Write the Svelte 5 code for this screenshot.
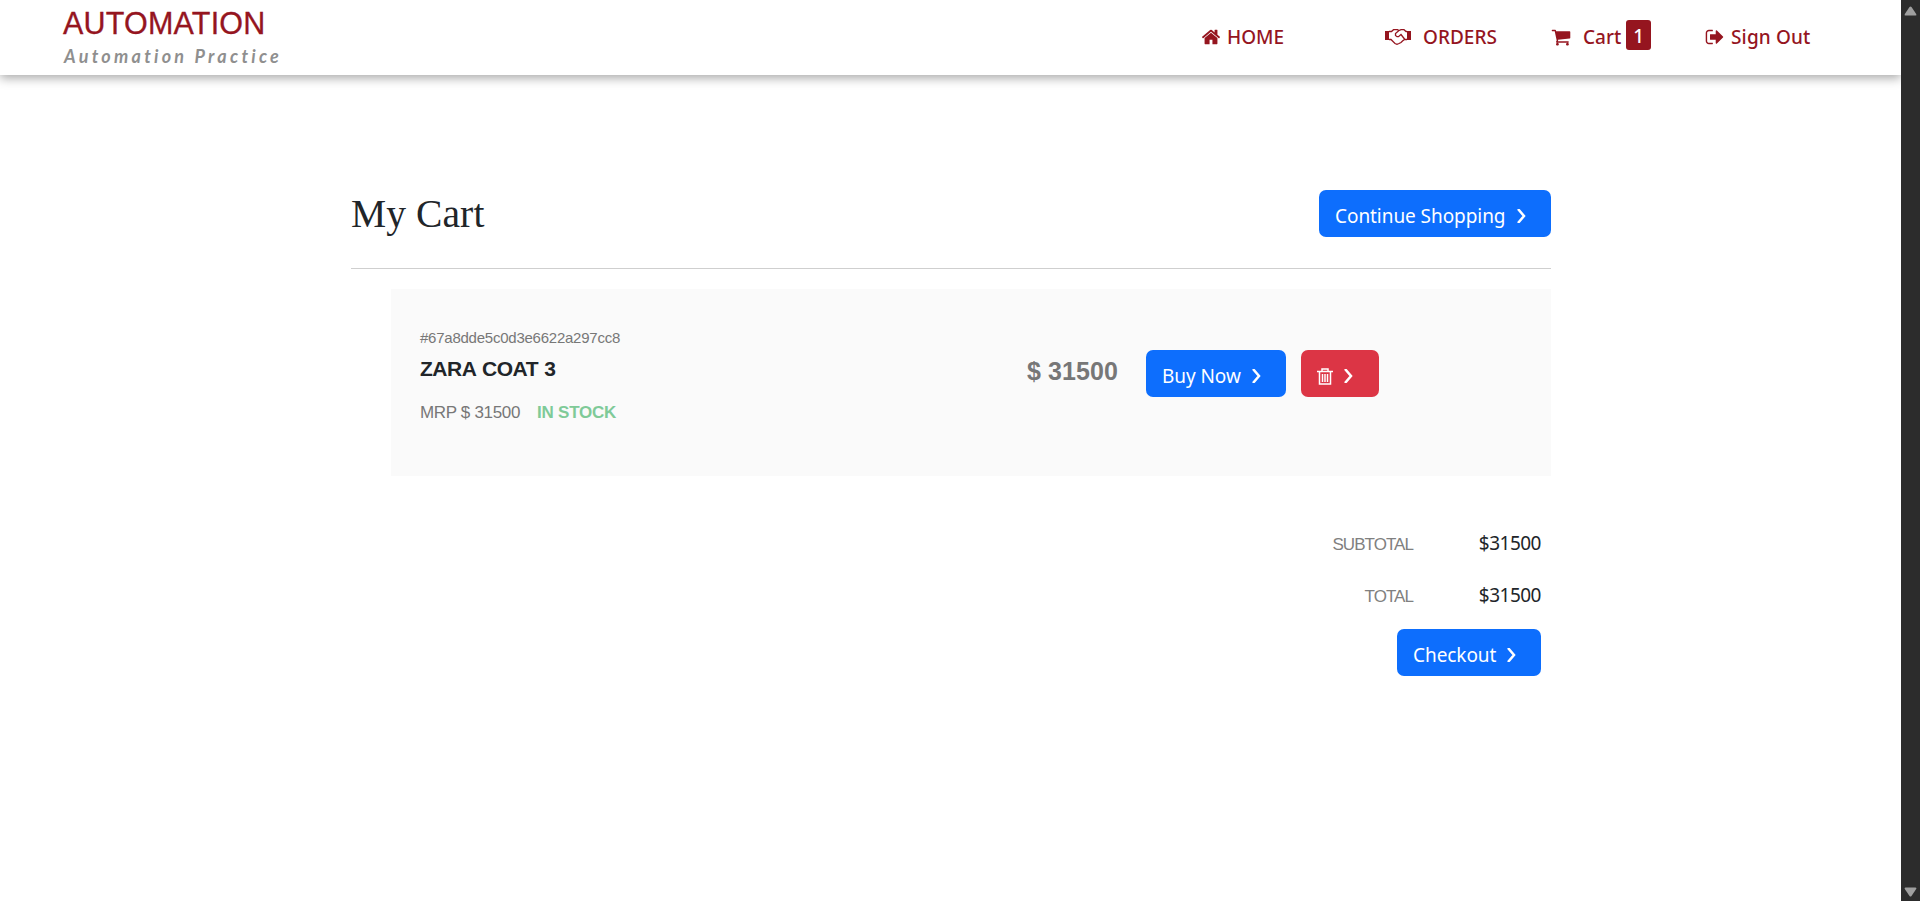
<script>
  const product = { id: '#67a8dde5c0d3e6622a297cc8', name: 'ZARA COAT 3', price: 31500 };
  let count = $state(1);
  const total = $derived(product.price * count);
</script>

{#snippet chevron()}
  <svg class="chev" viewBox="0 0 9 14"><path d="M1 0 L7 7 L1 14" /></svg>
{/snippet}

<div class="window">
  <div class="page">
    <header>
      <div class="brand">
        <h3>AUTOMATION</h3>
        <p>Automation Practice</p>
      </div>
      <nav>
        <a class="home" href="#home">
          <svg width="20" height="20" viewBox="0 0 1792 1792"><path d="M1472 992v480q0 26-19 45t-45 19h-384v-384h-256v384h-384q-26 0-45-19t-19-45v-480q0-1 .5-3t.5-3l575-474 575 474q1 2 1 6zm223-69l-62 74q-8 9-21 11h-3q-13 0-21-7l-692-577-692 577q-12 8-24 7-13-2-21-11l-62-74q-8-10-7-23.5t11-21.5l719-599q32-26 76-26t76 26l244 204v-195q0-14 9-23t23-9h192q14 0 23 9t9 23v408l219 182q10 8 11 21.5t-7 23.5z" /></svg>
          <span>HOME</span>
        </a>
        <a class="orders" href="#orders">
          <svg width="26" height="16" viewBox="0 0 26 16">
            <path d="M0 2h4v9H0zM22 2h4v9h-4z" />
            <path class="line" d="M4 2.5h2.500L8.500.7h4L14 1.500 16 .7h3l2 1.800h1M4 10.500h2l4 4 2 .8 2-.8 2-1 1.500-1.500 2-1.500H22M14 1.500l-3.500 3v2l1.500 1.200h1.500L16 5.500l3.500 4.500" />
          </svg>
          <span>ORDERS</span>
        </a>
        <a class="cart" href="#cart">
          <svg width="20" height="20" viewBox="0 0 1792 1792"><path d="M704 1536q0 52-38 90t-90 38-90-38-38-90 38-90 90-38 90 38 38 90zm896 0q0 52-38 90t-90 38-90-38-38-90 38-90 90-38 90 38 38 90zm128-1088v512q0 24-16.500 42.500t-40.500 21.500l-1044 122q13 60 13 70 0 16-24 64h920q26 0 45 19t19 45-19 45-45 19h-1024q-26 0-45-19t-19-45q0-11 8-31.500t16-36 21.500-40 15.500-29.500l-177-823h-204q-26 0-45-19t-19-45 19-45 45-19h256q16 0 28.500 6.500t19.500 15.500 13 24.500 8 26 5.500 29.500 4.500 26h1201q26 0 45 19t19 45z" /></svg>
          <span>Cart</span><b>{count}</b>
        </a>
        <a class="out" href="#signout">
          <svg width="20" height="20" viewBox="0 0 1792 1792"><path d="M704 1440q0 4 1 20t.5 26.500-3 23.500-10 19.500-20.500 6.500h-320q-119 0-203.500-84.500t-84.500-203.500v-704q0-119 84.500-203.500t203.500-84.500h320q13 0 22.500 9.500t9.500 22.500q0 4 1 20t.5 26.500-3 23.500-10 19.500-20.500 6.500h-320q-66 0-113 47t-47 113v704q0 66 47 113t113 47h312l11.500 1 11.500 3 8 5.500 7 9 2 13.500zm928-544q0 26-19 45l-544 544q-19 19-45 19t-45-19-19-45v-288h-448q-26 0-45-19t-19-45v-384q0-26 19-45t45-19h448v-288q0-26 19-45t45-19 45 19l544 544q19 19 19 45z" /></svg>
          <span>Sign Out</span>
        </a>
      </nav>
    </header>

    <main>
      <div class="heading">
        <h1>My Cart</h1>
        <button class="btn shop"><span>Continue Shopping</span>{@render chevron()}</button>
      </div>
      <section class="item">
        <div class="info">
          <p class="id">{product.id}</p>
          <h3>{product.name}</h3>
          <p class="mrp">MRP $ {product.price}<span>IN STOCK</span></p>
        </div>
        <p class="price">$ {product.price}</p>
        <button class="btn buy"><span>Buy Now</span>{@render chevron()}</button>
        <button class="btn danger" aria-label="Remove">
          <svg class="trash" width="16" height="17" viewBox="0 0 16 17"><path d="M0 3.500h16M5 3V1h6v2M2.500 4v12h11V4M5.500 6v8M8 6v8M10.500 6v8" /></svg>
          {@render chevron()}
        </button>
      </section>
      <section class="totals">
        <div class="row"><span class="label">SUBTOTAL</span><span class="value">${total}</span></div>
        <div class="row"><span class="label total">TOTAL</span><span class="value">${total}</span></div>
        <button class="btn check"><span>Checkout</span>{@render chevron()}</button>
      </section>
    </main>
  </div>
  <div class="scrollbar">
    <svg width="13" height="10" viewBox="0 0 13 10"><path d="M1.500 9.500Q0 9.500 .8 8L5.500 1Q6.500 0 7.500 1L12.200 8Q13 9.500 11.500 9.500z" /></svg>
    <svg width="13" height="10" viewBox="0 0 13 10"><path d="M1.500.5Q0 .5 .8 2L5.500 9Q6.500 10 7.500 9L12.200 2Q13 .5 11.500 .5z" /></svg>
  </div>
</div>

<style>
  :global(body) { margin: 0; background: #fff; overflow: hidden; }
  * { box-sizing: border-box; }
  h1, h3, p { margin: 0; }
  .window { display: flex; height: 901px; font-family: "Noto Sans", sans-serif; color: #212529; }
  .page { width: 1901px; overflow: hidden; }
  .scrollbar { width: 19px; background: #2c2c2c; display: flex; flex-direction: column; align-items: center; justify-content: space-between; padding: 6px 0 4px; }
  .scrollbar svg { fill: #9f9f9f; }
  header { height: 75px; display: flex; justify-content: space-between; box-shadow: 0 3px 10px rgba(0, 0, 0, .35); padding-left: 63px; }
  .brand h3 { font: 400 30.500px/34px "Liberation Sans", sans-serif; color: #95151f; margin-top: 6px; letter-spacing: .2px; -webkit-text-stroke: .3px; }
  .brand p { font: italic 700 18px/22px Lato, sans-serif; color: #8f8f8f; letter-spacing: 3.250px; margin: 5px 0 0 1px; }
  nav { display: flex; width: 700px; height: 74px; }
  nav a { display: flex; align-items: center; color: #95151f; text-decoration: none; font-size: 19px; font-weight: 500; white-space: nowrap; }
  nav svg { fill: currentColor; flex: none; }
  nav svg .line { fill: none; stroke: currentColor; stroke-width: 1.300; }
  .home { width: 184px; gap: 6px; }
  .orders { width: 166px; gap: 12px; }
  .cart { width: 154px; gap: 12px; }
  .cart b { width: 25px; height: 30px; border-radius: 3px; background: #95151f; color: #fff; font-weight: 500; text-align: center; line-height: 32px; margin: -4px 0 0 -7px; }
  .out { gap: 6px; letter-spacing: .15px; }
  main { width: 1200px; margin: 115px 0 0 351px; }
  .heading { height: 79px; border-bottom: 1px solid #cfcfcf; display: flex; justify-content: space-between; }
  h1 { font: 400 39.500px/48px "Liberation Serif", serif; letter-spacing: .1px; }
  .btn { height: 47px; border: 0; border-radius: 7px; background: #0d6efd; color: #fff; font: 400 19px/26px "Noto Sans", sans-serif; letter-spacing: -.06px; display: flex; align-items: center; padding: 5px 0 0 16px; white-space: nowrap; }
  .btn span { flex: none; }
  .chev { width: 9px; height: 14px; fill: none; stroke: #fff; stroke-width: 2.500; margin-left: 11px; flex: none; }
  .shop { width: 232px; }
  .item { margin: 20px 0 0 40px; height: 187px; background: #fafafa; display: flex; padding: 0 0 0 29px; }
  .info { width: 607px; padding-top: 39px; font-family: "Liberation Sans", sans-serif; color: #777; }
  .id { font-size: 15px; line-height: 20px; letter-spacing: -.24px; }
  .info h3 { font-size: 21px; line-height: 26px; margin-top: 8px; color: #212529; letter-spacing: -.48px; word-spacing: 1px; }
  .mrp { font-size: 17px; line-height: 22px; margin-top: 20px; letter-spacing: -.33px; }
  .mrp span { color: #7fca98; font-weight: 700; margin-left: 17px; letter-spacing: -.22px; }
  .price { width: 119px; font: 700 25px/30px "Liberation Sans", sans-serif; color: #777; padding-top: 67px; white-space: nowrap; letter-spacing: .1px; }
  .item .btn { margin-top: 61px; }
  .buy { width: 140px; }
  .danger { background: #dc3545; width: 78px; margin-left: 15px; }
  .trash { fill: none; stroke: #fff; stroke-width: 1.500; }
  .totals { padding: 41px 10px 0 0; display: flex; flex-direction: column; align-items: flex-end; }
  .row { height: 52px; display: flex; justify-content: flex-end; align-items: center; }
  .label { font: 400 17px/26px "Liberation Sans", sans-serif; color: #808080; letter-spacing: -.95px; padding-top: 3px; }
  .value { width: 128px; text-align: right; font-size: 19px; letter-spacing: -.5px; }
  .check { width: 144px; margin-top: 8px; }
</style>
